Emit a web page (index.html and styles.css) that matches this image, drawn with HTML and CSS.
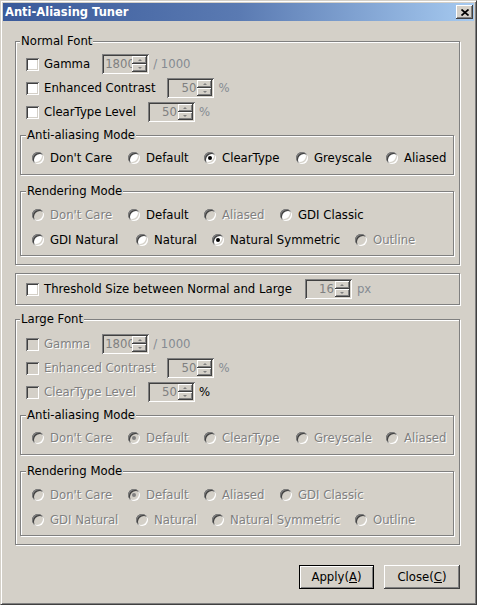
FILE: index.html
```html
<!DOCTYPE html>
<html lang="en">
<head>
<meta charset="utf-8">
<title>Anti-Aliasing Tuner</title>
<link rel="stylesheet" href="styles.css">
</head>
<body>
<div class="window">
  <div class="titlebar">
    <span class="title">Anti-Aliasing Tuner</span>
    <button class="close-x" aria-label="Close">
      <svg width="8" height="7" viewBox="0 0 8 7"><path d="M0.5 0.5 L7.5 6.5 M7.5 0.5 L0.5 6.5" stroke="#000" stroke-width="1.7" fill="none"/></svg>
    </button>
  </div>
  <div class="content">
    <fieldset class="group">
      <legend>Normal Font</legend>
      <div class="group-body">
        <div class="row">
          <span class="check"></span><span class="label">Gamma</span>
          <span class="spin spin-left"><span class="spin-text">1800</span><span class="spin-btns"><span class="spin-btn up"></span><span class="spin-btn down"></span></span></span>
          <span class="unit">/ 1000</span>
        </div>
        <div class="row">
          <span class="check"></span><span class="label">Enhanced Contrast</span>
          <span class="spin"><span class="spin-text">50</span><span class="spin-btns"><span class="spin-btn up"></span><span class="spin-btn down"></span></span></span>
          <span class="unit">%</span>
        </div>
        <div class="row">
          <span class="check"></span><span class="label">ClearType Level</span>
          <span class="spin"><span class="spin-text">50</span><span class="spin-btns"><span class="spin-btn up"></span><span class="spin-btn down"></span></span></span>
          <span class="unit">%</span>
        </div>
        <fieldset class="group sub">
          <legend>Anti-aliasing Mode</legend>
          <div class="sub-body">
            <div class="radio-row aa-row">
              <span class="opt"><span class="radio"></span>Don't Care</span>
              <span class="opt"><span class="radio"></span>Default</span>
              <span class="opt"><span class="radio on"></span>ClearType</span>
              <span class="opt"><span class="radio"></span>Greyscale</span>
              <span class="opt"><span class="radio"></span>Aliased</span>
            </div>
          </div>
        </fieldset>
        <fieldset class="group sub sub-render">
          <legend>Rendering Mode</legend>
          <div class="sub-body">
            <div class="radio-row rm-row1">
              <span class="opt dis"><span class="radio"></span>Don't Care</span>
              <span class="opt"><span class="radio"></span>Default</span>
              <span class="opt dis"><span class="radio"></span>Aliased</span>
              <span class="opt"><span class="radio"></span>GDI Classic</span>
            </div>
            <div class="radio-row rm-row2">
              <span class="opt"><span class="radio"></span>GDI Natural</span>
              <span class="opt"><span class="radio"></span>Natural</span>
              <span class="opt"><span class="radio on"></span>Natural Symmetric</span>
              <span class="opt dis"><span class="radio"></span>Outline</span>
            </div>
          </div>
        </fieldset>
      </div>
    </fieldset>

    <div class="threshold">
      <span class="check"></span><span class="label">Threshold Size between Normal and Large</span>
      <span class="spin spin-thresh"><span class="spin-text">16</span><span class="spin-btns"><span class="spin-btn up"></span><span class="spin-btn down"></span></span></span>
      <span class="unit">px</span>
    </div>

    <fieldset class="group group-large">
      <legend>Large Font</legend>
      <div class="group-body">
        <div class="row dis">
          <span class="check"></span><span class="label">Gamma</span>
          <span class="spin spin-left"><span class="spin-text">1800</span><span class="spin-btns"><span class="spin-btn up"></span><span class="spin-btn down"></span></span></span>
          <span class="unit">/ 1000</span>
        </div>
        <div class="row dis">
          <span class="check"></span><span class="label">Enhanced Contrast</span>
          <span class="spin"><span class="spin-text">50</span><span class="spin-btns"><span class="spin-btn up"></span><span class="spin-btn down"></span></span></span>
          <span class="unit">%</span>
        </div>
        <div class="row dis">
          <span class="check"></span><span class="label">ClearType Level</span>
          <span class="spin"><span class="spin-text">50</span><span class="spin-btns"><span class="spin-btn up"></span><span class="spin-btn down"></span></span></span>
          <span class="unit unit-dark">%</span>
        </div>
        <fieldset class="group sub">
          <legend>Anti-aliasing Mode</legend>
          <div class="sub-body">
            <div class="radio-row aa-row">
              <span class="opt dis"><span class="radio"></span>Don't Care</span>
              <span class="opt dis"><span class="radio on"></span>Default</span>
              <span class="opt dis"><span class="radio"></span>ClearType</span>
              <span class="opt dis"><span class="radio"></span>Greyscale</span>
              <span class="opt dis"><span class="radio"></span>Aliased</span>
            </div>
          </div>
        </fieldset>
        <fieldset class="group sub sub-render">
          <legend>Rendering Mode</legend>
          <div class="sub-body">
            <div class="radio-row rm-row1">
              <span class="opt dis"><span class="radio"></span>Don't Care</span>
              <span class="opt dis"><span class="radio on"></span>Default</span>
              <span class="opt dis"><span class="radio"></span>Aliased</span>
              <span class="opt dis"><span class="radio"></span>GDI Classic</span>
            </div>
            <div class="radio-row rm-row2">
              <span class="opt dis"><span class="radio"></span>GDI Natural</span>
              <span class="opt dis"><span class="radio"></span>Natural</span>
              <span class="opt dis"><span class="radio"></span>Natural Symmetric</span>
              <span class="opt dis"><span class="radio"></span>Outline</span>
            </div>
          </div>
        </fieldset>
      </div>
    </fieldset>

    <div class="buttons">
      <button class="btn btn-default">Apply(<u>A</u>)</button>
      <button class="btn btn-close">Close(<u>C</u>)</button>
    </div>
  </div>
</div>
</body>
</html>
```
FILE: styles.css
```css
* { box-sizing: border-box; }

body {
  margin: 0;
  background: #d4d0c8;
  font-family: "DejaVu Sans", sans-serif;
  font-size: 11.7px;
  color: #000;
}

.window {
  width: 477px;
  height: 605px;
  display: flex;
  flex-direction: column;
  background: #d4d0c8;
  border: 1px solid;
  border-color: #d4d0c8 #404040 #404040 #d4d0c8;
  box-shadow: inset 1px 1px #fff, inset -1px -1px #808080;
  padding: 2px;
}

.titlebar {
  height: 18px;
  display: flex;
  align-items: center;
  justify-content: space-between;
  padding: 0 1px 0 2px;
  background: linear-gradient(90deg, #3a5a9a 0%, #5a7ab2 50%, #a6caf0 100%);
  color: #fff;
  font-weight: bold;
  font-size: 11.5px;
}

.close-x {
  width: 17px;
  height: 14px;
  padding: 0;
  border: none;
  background: #d4d0c8;
  box-shadow: inset -1px -1px #404040, inset 1px 1px #fff, inset -2px -2px #808080;
  display: flex;
  align-items: center;
  justify-content: center;
}
.close-x svg { display: block; }

.content {
  flex: 1;
  display: flex;
  flex-direction: column;
  padding: 13px 14px 0 12px;
}

.group {
  margin: 0;
  padding: 0;
  min-width: 0;
  border: 1px solid #808080;
  box-shadow: inset 1px 1px #fff, 1px 1px #fff;
}

.group > legend {
  margin-left: 4px;
  padding: 0 1px;
  line-height: 15px;
  background: #d4d0c8;
}

.group-body {
  padding: 3px 5px 8px 4px;
}
.group-large .group-body { padding-top: 5px; }

.row {
  display: flex;
  align-items: center;
  height: 24px;
  padding-left: 6px;
}

.check {
  flex: none;
  width: 13px;
  height: 13px;
  margin-right: 5px;
  background: #fff;
  box-shadow: inset 1px 1px #808080, inset -1px -1px #fff, inset 2px 2px #404040, inset -2px -2px #d4d0c8;
}
.dis .check { background: #d4d0c8; }

.label { white-space: nowrap; }
.dis .label, .opt.dis {
  color: #808080;
  text-shadow: 1px 1px 0 #fff;
}

.spin {
  flex: none;
  display: flex;
  width: 47px;
  height: 20px;
  margin-left: 12px;
  padding: 2px;
  background: #d4d0c8;
  color: #808080;
  box-shadow: inset 1px 1px #808080, inset -1px -1px #fff, inset 2px 2px #404040, inset -2px -2px #d4d0c8;
}
.spin-text {
  flex: 1;
  min-width: 0;
  overflow: hidden;
  white-space: nowrap;
  text-align: right;
  line-height: 16px;
  padding-right: 1px;
}
.spin-left .spin-text { text-align: left; padding: 0 0 0 1px; }
.spin-btns {
  flex: none;
  width: 15px;
  display: flex;
  flex-direction: column;
}
.spin-btn {
  flex: 1;
  display: flex;
  align-items: center;
  justify-content: center;
  background: #d4d0c8;
  box-shadow: inset -1px -1px #404040, inset 1px 1px #fff, inset -2px -2px #808080;
}
.spin-btn::after {
  content: "";
  width: 0;
  height: 0;
  border-left: 2px solid transparent;
  border-right: 2px solid transparent;
}
.spin-btn.up::after { border-bottom: 2px solid #808080; margin-top: -1px; }
.spin-btn.down::after { border-top: 2px solid #808080; margin-top: -1px; }

.unit {
  margin-left: 4px;
  color: #858b92;
}
.unit-dark { color: #000; }

.sub { margin-top: 4px; }
.sub > legend { margin-left: 5px; }
.sub-render { margin-top: 9px; }

.sub-body { padding: 3px 0 4px 11px; }
.sub-render .sub-body { padding-bottom: 3px; }

.radio-row {
  display: grid;
  align-items: center;
  height: 24px;
}
.sub-render .radio-row { height: 25px; }
.aa-row { grid-template-columns: 96px 76px 92px 90px auto; }
.rm-row1 { grid-template-columns: 96px 76px 76px auto; }
.rm-row2 { grid-template-columns: 104px 76px 143px auto; }

.opt {
  display: flex;
  align-items: center;
  white-space: nowrap;
}
.radio {
  flex: none;
  width: 12px;
  height: 12px;
  margin-right: 6px;
  border-radius: 50%;
  background: #fff;
  display: flex;
  align-items: center;
  justify-content: center;
  box-shadow: inset 1px 1px #808080, inset -1px -1px #fff, inset 2px 2px #404040, inset -2px -2px #d4d0c8;
}
.opt.dis .radio { background: #d4d0c8; }
.radio.on::after {
  content: "";
  width: 4px;
  height: 4px;
  border-radius: 50%;
  background: #000;
}
.opt.dis .radio.on::after { background: #808080; }

.threshold {
  margin-top: 8px;
  margin-bottom: 7px;
  height: 32px;
  display: flex;
  align-items: center;
  padding-left: 10px;
  border: 1px solid #808080;
  box-shadow: inset 1px 1px #fff, 1px 1px #fff;
}
.spin-thresh { margin-left: 13px; }
.threshold .unit { margin-left: 5px; }

.buttons {
  margin-top: 20px;
  display: flex;
  justify-content: flex-end;
  gap: 10px;
}
.btn {
  width: 75px;
  height: 24px;
  padding: 0;
  font: inherit;
  color: #000;
  background: #d4d0c8;
  border: none;
}
.btn u { text-underline-offset: 1px; }
.btn-default {
  border: 1px solid #000;
  box-shadow: inset 1px 1px #fff, inset -1px -1px #808080;
}
.btn-close {
  width: 76px;
  box-shadow: inset -1px -1px #404040, inset 1px 1px #fff, inset -2px -2px #808080;
}
```
